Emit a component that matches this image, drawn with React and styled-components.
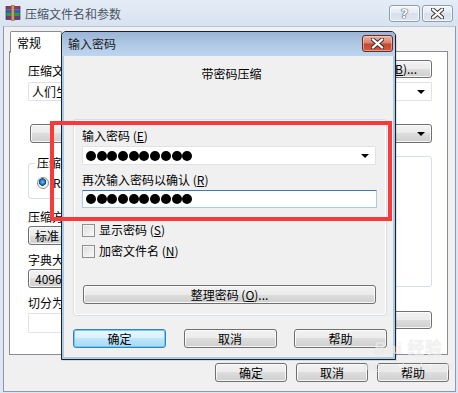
import React from 'react';
import styled, { createGlobalStyle } from 'styled-components';

const FONT = `"Noto Sans CJK SC", "Liberation Sans", sans-serif`;

const GlobalStyle = createGlobalStyle`
  html, body {
    margin: 0;
    padding: 0;
  }
  body {
    width: 458px;
    height: 393px;
    overflow: hidden;
    font-family: ${FONT};
    font-size: 12px;
    color: #000;
    background: #f0f0f0;
  }
  u {
    text-decoration: underline;
    text-underline-offset: 1px;
  }
`;

// ---------- outer window ----------
const Window = styled.div`
  position: relative;
  width: 458px;
  height: 393px;
  box-sizing: border-box;
  background: #dde6f2;
  display: flex;
  flex-direction: column;
  overflow: hidden;
`;

const TitleBar = styled.div`
  height: 26px;
  flex: 0 0 26px;
  display: flex;
  align-items: flex-start;
  padding: 0 5px 0 5px;
  background: linear-gradient(#e4ecf6, #d8e3f0);
`;

const AppIcon = styled.svg`
  margin-top: 5px;
  flex: 0 0 16px;
`;

const WindowTitle = styled.span`
  margin: 6px 0 0 4px;
  line-height: 16px;
  font-size: 12px;
  color: #4a5360;
  flex: 1;
`;

const CaptionButton = styled.div`
  width: 31px;
  height: 17px;
  box-sizing: border-box;
  margin: 5px 0 0 2px;
  border: 1px solid #8d9db6;
  border-radius: 3px;
  background: linear-gradient(#f3f6fa, #e3eaf3 50%, #d7e0ec 50%, #dee6f0);
  box-shadow: inset 0 0 0 1px rgba(255, 255, 255, 0.7);
  display: flex;
  align-items: center;
  justify-content: center;
  font: bold 13px/1 "DejaVu Sans", sans-serif;
  color: #fff;
  text-shadow: 0 0 1px #3e4957, 0 0 1px #3e4957, 0 0 1px #3e4957;
`;

const Client = styled.div`
  flex: 1;
  margin: 0 2px 1px 3px;
  border: 1px solid #8c99ab;
  border-top-color: #b8c6d8;
  background: #f0f0f0;
  padding: 4px 7px 0 5px;
  display: flex;
  flex-direction: column;
`;

const TabStrip = styled.div`
  display: flex;
  height: 21px;
  padding-left: 1px;
  margin-bottom: -1px;
`;

const Tab = styled.div`
  width: ${(p) => p.$w}px;
  box-sizing: border-box;
  height: 22px;
  border: 1px solid #898c95;
  border-bottom: 1px solid #fff;
  border-radius: 2px 2px 0 0;
  background: #fff;
  padding: 4px 0 0 6px;
  line-height: 14px;
  position: relative;
`;

const Panel = styled.div`
  height: 304px;
  box-sizing: border-box;
  border: 1px solid #898c95;
  background: #fff;
  padding: 8px 15px 0 18px;
  display: flex;
  flex-direction: column;
`;

const Row = styled.div`
  display: flex;
  justify-content: space-between;
  align-items: center;
  margin-top: ${(p) => p.$mt || 0}px;
  margin-left: ${(p) => p.$ml || 0}px;
`;

const FieldLabel = styled.div`
  line-height: 14px;
  margin-top: ${(p) => p.$mt || 0}px;
  white-space: nowrap;
`;

const Button = styled.div`
  box-sizing: border-box;
  width: ${(p) => (p.$w ? `${p.$w}px` : 'auto')};
  height: ${(p) => p.$h || 19}px;
  margin-top: ${(p) => p.$mt || 0}px;
  margin-left: ${(p) => p.$ml || 0}px;
  border: 1px solid ${(p) => (p.$default ? '#3c7fb1' : '#707070')};
  border-radius: 3px;
  background: ${(p) =>
    p.$default
      ? 'linear-gradient(#eaf6fd, #d9f0fc 50%, #bee6fd 50%, #a7d9f5)'
      : 'linear-gradient(#f2f2f2, #ebebeb 50%, #dddddd 50%, #cfcfcf)'};
  box-shadow: inset 0 0 0 1px ${(p) => (p.$default ? '#62d0fa' : 'rgba(255,255,255,0.8)')};
  display: flex;
  align-items: center;
  justify-content: center;
  line-height: 14px;
  white-space: nowrap;
`;

const Combo = styled.div`
  box-sizing: border-box;
  width: ${(p) => (p.$w ? `${p.$w}px` : 'auto')};
  height: ${(p) => p.$h || 19}px;
  margin-top: ${(p) => p.$mt || 0}px;
  border: 1px solid ${(p) => (p.$face ? '#707070' : '#e0e2e6')};
  border-radius: ${(p) => (p.$face ? 3 : 1)}px;
  background: ${(p) =>
    p.$face ? 'linear-gradient(#f2f2f2, #ebebeb 50%, #dddddd 50%, #cfcfcf)' : '#fff'};
  box-shadow: ${(p) => (p.$face ? 'inset 0 0 0 1px rgba(255,255,255,0.8)' : 'none')};
  display: flex;
  align-items: center;
  padding: 0 6px 0 ${(p) => p.$pl || 3}px;
  line-height: 14px;
  white-space: nowrap;
`;

const ComboText = styled.span`
  flex: 1;
  overflow: hidden;
`;

const Arrow = styled.span`
  width: 0;
  height: 0;
  border-left: 4px solid transparent;
  border-right: 4px solid transparent;
  border-top: 4px solid #000;
  margin-top: 1px;
`;

const TextBox = styled.div`
  box-sizing: border-box;
  height: ${(p) => p.$h || 20}px;
  margin-top: ${(p) => p.$mt || 0}px;
  border: 1px solid #e0e2e6;
  border-radius: 1px;
  background: #fff;
`;

const Columns = styled.div`
  display: flex;
  justify-content: space-between;
  margin-top: 13px;
`;

const Column = styled.div`
  width: ${(p) => p.$w}px;
  display: flex;
  flex-direction: column;
`;

const GroupSet = styled.fieldset`
  margin: 0;
  min-width: 0;
  height: ${(p) => (p.$h ? `${p.$h}px` : 'auto')};
  box-sizing: border-box;
  border: 1px solid #d5dfe5;
  border-radius: 3px;
  box-shadow: inset 0 0 0 1px #fff;
  padding: 6px 8px 8px 8px;

  legend {
    padding: 0 2px;
    margin-left: -2px;
    line-height: 14px;
  }
`;

const RadioRow = styled.div`
  display: flex;
  align-items: center;
  gap: 4px;
  line-height: 14px;
`;

const Radio = styled.span`
  width: 12px;
  height: 12px;
  box-sizing: border-box;
  border-radius: 50%;
  border: 1px solid #8e8f8f;
  background: radial-gradient(circle at 45% 40%, #7cc6f5 0, #1c6db6 2.5px, #0d4a8a 3.5px, #e9e9e9 4px, #fdfdfd 6px);
`;

const ButtonRow = styled.div`
  display: flex;
  justify-content: flex-end;
  gap: 9px;
  margin-top: 8px;
  margin-right: -1px;
`;

// ---------- modal dialog ----------
const Dialog = styled.div`
  position: absolute;
  z-index: 5;
  left: 61px;
  top: 31px;
  width: 335px;
  height: 329px;
  box-sizing: border-box;
  border: 1px solid #19222c;
  border-radius: 5px 5px 0 0;
  background: #a8cbe9;
  padding: 0 2px 2px 2px;
  display: flex;
  flex-direction: column;
  box-shadow: 1px 1px 0 rgba(0, 0, 0, 0.1);
`;

const DialogTitleBar = styled.div`
  height: 24px;
  flex: 0 0 24px;
  margin: 0 -2px;
  padding: 0 2px 0 6px;
  border-radius: 4px 4px 0 0;
  background: linear-gradient(#9ab5d7, #b3cbe7 60%, #bdd5ee);
  display: flex;
  align-items: flex-start;
  justify-content: space-between;
`;

const DialogTitle = styled.span`
  margin-top: 5px;
  line-height: 14px;
  color: #1a1a1a;
`;

const CloseButton = styled.div`
  width: 31px;
  height: 17px;
  box-sizing: border-box;
  margin-top: 3px;
  border: 1px solid #6b2a22;
  border-radius: 3px;
  background: linear-gradient(#eab2a3, #d8826f 45%, #c4472f 55%, #cf5b3f);
  box-shadow: inset 0 0 0 1px rgba(255, 220, 210, 0.5);
  display: flex;
  align-items: center;
  justify-content: center;
`;

const DialogBody = styled.div`
  flex: 1;
  background: #f0f0f0;
  padding: 11px 6px 0 9px;
  display: flex;
  flex-direction: column;
`;

const Heading = styled.div`
  text-align: center;
  line-height: 14px;
  padding-left: 3px;
`;

const PasswordGroup = styled.div`
  margin-top: 38px;
  height: 197px;
  box-sizing: border-box;
  border: 1px solid #d5dfe5;
  border-radius: 3px;
  box-shadow: inset 0 0 0 1px #fff;
  padding: 0 10px 0 8px;
  display: flex;
  flex-direction: column;
`;

const PasswordInput = styled.div`
  box-sizing: border-box;
  height: 18px;
  margin-top: 3px;
  margin-right: -1px;
  border: 1px solid #a9cbe6;
  border-top-color: #3d7bad;
  border-radius: 1px;
  background: #fff;
  display: flex;
  align-items: center;
  padding-left: 3px;
`;

const Dots = styled.div`
  display: flex;
  gap: 0.7px;
  flex: 1;
`;

const Dot = styled.span`
  width: 10px;
  height: 10px;
  border-radius: 50%;
  background: #000;
`;

const CheckRow = styled.div`
  display: flex;
  align-items: center;
  gap: 4px;
  height: 16px;
  margin-top: ${(p) => p.$mt}px;
  line-height: 14px;
`;

const CheckBox = styled.span`
  width: 13px;
  height: 13px;
  box-sizing: border-box;
  border: 1px solid #8e8f8f;
  background: linear-gradient(135deg, #dcdcdc, #fbfbfb);
  box-shadow: inset 0 0 0 1px #f4f4f4;
`;

const DialogButtons = styled.div`
  display: flex;
  justify-content: space-between;
  margin-top: 13px;
`;

// ---------- overlays ----------
const Highlight = styled.div`
  position: absolute;
  z-index: 6;
  left: 50px;
  top: 121px;
  width: 342px;
  height: 100px;
  box-sizing: border-box;
  border: 4px solid #f73b3b;
  pointer-events: none;
`;

const Watermark = styled.div`
  position: absolute;
  z-index: 7;
  left: 364px;
  top: 340px;
  display: flex;
  flex-direction: column;
  align-items: center;
  color: rgba(255, 255, 255, 0.6);
  text-shadow: 0 0 1px rgba(120, 120, 120, 0.25);
  pointer-events: none;
`;

const WatermarkBrand = styled.div`
  font: bold 17px/18px "Liberation Sans", "Noto Sans CJK SC", sans-serif;
  letter-spacing: 0.5px;
`;

const WatermarkUrl = styled.div`
  font: 11px/12px "Liberation Sans", sans-serif;
  margin-top: 2px;
`;

const CloseGlyph = ({ size = 11 }) => (
  <svg width={size} height={size - 2} viewBox="0 0 11 9">
    <path d="M1.5 1 L9.5 8 M9.5 1 L1.5 8" stroke="#3c2a2a" strokeWidth="3.4" strokeLinecap="round" />
    <path d="M1.5 1 L9.5 8 M9.5 1 L1.5 8" stroke="#fff" strokeWidth="1.8" strokeLinecap="round" />
  </svg>
);

const WinRarIcon = () => (
  <AppIcon width="16" height="16" viewBox="0 0 16 16">
    <rect x="1" y="1.5" width="14" height="3.2" rx="0.6" fill="#9b2f6e" />
    <rect x="1" y="4.7" width="14" height="3.2" rx="0.6" fill="#2c5fc4" />
    <rect x="1" y="7.9" width="14" height="3.2" rx="0.6" fill="#2f9b3c" />
    <rect x="1" y="11.1" width="14" height="3.4" rx="0.6" fill="#7a2f8c" />
    <rect x="1" y="1.5" width="14" height="13" fill="none" stroke="#2a2a2a" strokeWidth="0.6" />
    <rect x="6.2" y="0.5" width="3" height="15" fill="#c8a05a" stroke="#7a5a22" strokeWidth="0.5" />
  </AppIcon>
);

const dots = Array.from({ length: 10 });

const App = () => {
  return (
    <>
      <GlobalStyle />
      <Window>
        <TitleBar>
          <WinRarIcon />
          <WindowTitle>压缩文件名和参数</WindowTitle>
          <CaptionButton>?</CaptionButton>
          <CaptionButton>
            <CloseGlyph size={13} />
          </CaptionButton>
        </TitleBar>

        <Client>
          <TabStrip>
            <Tab $w={52}>常规</Tab>
          </TabStrip>
          <Panel>
            <Row>
              <FieldLabel $mt={4}>压缩文件名(<u>A</u>)</FieldLabel>
              <Button $w={80} $h={18}>
                浏览(<u>B</u>)...
              </Button>
            </Row>
            <Combo $mt={4} $pl={3}>
              <ComboText>人们生活中的压缩文件.rar</ComboText>
              <Arrow />
            </Combo>
            <Row $mt={23} $ml={2}>
              {/* profile button: its caption sits entirely behind the dialog */}
              <Button $w={168} />
              <Combo $w={221} $face $pl={6}>
                <ComboText />
                <Arrow />
              </Combo>
            </Row>
            <Columns>
              <Column $w={178}>
                <GroupSet>
                  <legend>压缩文件格式</legend>
                  <RadioRow>
                    <Radio />
                    <span>RAR</span>
                  </RadioRow>
                </GroupSet>
                <FieldLabel $mt={11}>压缩方式(<u>C</u>)</FieldLabel>
                <Combo $mt={2} $face $pl={6}>
                  <ComboText>标准</ComboText>
                  <Arrow />
                </Combo>
                <FieldLabel $mt={8}>字典大小(<u>D</u>)</FieldLabel>
                <Combo $mt={2} $face $pl={6}>
                  <ComboText>4096 KB</ComboText>
                  <Arrow />
                </Combo>
                <FieldLabel $mt={8}>切分为分卷(<u>V</u>)，大小</FieldLabel>
                <TextBox $mt={3} />
              </Column>
              <Column $w={215}>
                <GroupSet $h={131} />
                <Button $mt={24} $h={18} />
              </Column>
            </Columns>
          </Panel>
          <ButtonRow>
            <Button $w={72}>确定</Button>
            <Button $w={72}>取消</Button>
            <Button $w={72}>帮助</Button>
          </ButtonRow>
        </Client>

        <Dialog>
          <DialogTitleBar>
            <DialogTitle>输入密码</DialogTitle>
            <CloseButton>
              <CloseGlyph size={13} />
            </CloseButton>
          </DialogTitleBar>
          <DialogBody>
            <Heading>带密码压缩</Heading>
            <PasswordGroup>
              <FieldLabel $mt={9}>
                输入密码 (<u>E</u>)
              </FieldLabel>
              <Combo $mt={3}>
                <Dots>
                  {dots.map((_, i) => (
                    <Dot key={i} />
                  ))}
                </Dots>
                <Arrow />
              </Combo>
              <FieldLabel $mt={8}>
                再次输入密码以确认 (<u>R</u>)
              </FieldLabel>
              <PasswordInput>
                <Dots>
                  {dots.map((_, i) => (
                    <Dot key={i} />
                  ))}
                </Dots>
              </PasswordInput>
              <CheckRow $mt={14}>
                <CheckBox />
                <span>
                  显示密码 (<u>S</u>)
                </span>
              </CheckRow>
              <CheckRow $mt={5}>
                <CheckBox />
                <span>
                  加密文件名 (<u>N</u>)
                </span>
              </CheckRow>
              <Button $mt={26} $ml={1}>
                整理密码 (<u>O</u>)...
              </Button>
            </PasswordGroup>
            <DialogButtons>
              <Button $w={93} $default>
                确定
              </Button>
              <Button $w={93}>取消</Button>
              <Button $w={93}>帮助</Button>
            </DialogButtons>
          </DialogBody>
        </Dialog>

        <Highlight />

        <Watermark>
          <WatermarkBrand>Bai 经验</WatermarkBrand>
          <WatermarkUrl>jingyan.baidu.com</WatermarkUrl>
        </Watermark>
      </Window>
    </>
  );
};

export default App;
